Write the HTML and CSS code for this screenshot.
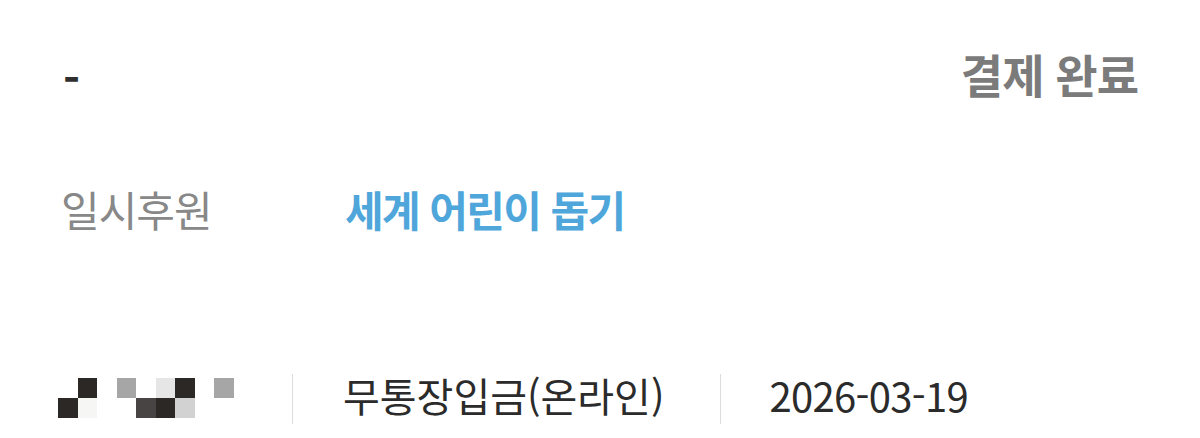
FILE: index.html
```html
<!DOCTYPE html>
<html lang="ko">
<head>
<meta charset="utf-8">
<link rel="stylesheet" href="styles.css">
</head>
<body>
<div class="card">
  <div class="head">
    <span class="dash">-</span>
    <span class="status">결제 완료</span>
  </div>
  <div class="type">
    <span class="label">일시후원</span>
    <span class="campaign">세계 어린이 돕기</span>
  </div>
  <div class="info">
    <div class="masked">
      <i></i><i class="k"></i><i></i><i class="m"></i><i></i><i class="l"></i><i class="k"></i><i></i><i class="m"></i>
      <i class="k"></i><i class="w"></i><i></i><i></i><i class="d"></i><i class="k"></i><i class="s"></i><i></i><i></i>
    </div>
    <span class="sep"></span>
    <span class="method">무통장입금(온라인)</span>
    <span class="sep sep2"></span>
    <span class="date">2026-03-19</span>
  </div>
</div>
</body>
</html>
```
FILE: styles.css
```css
html, body {
  margin: 0;
  padding: 0;
  background: #ffffff;
}
body {
  font-family: "Noto Sans CJK KR", "Noto Sans", sans-serif;
  color: #2b2b2b;
}
.card {
  width: 1200px;
  height: 438px;
  padding: 0 62px 0 58px;
  box-sizing: border-box;
  overflow: hidden;
}
.head {
  height: 146px;
  display: flex;
  justify-content: space-between;
  align-items: center;
}
.dash {
  font-size: 46px;
  font-weight: 700;
  color: #2f2f2f;
  padding-left: 5px;
  margin-top: 7px;
}
.status {
  font-size: 46px;
  font-weight: 700;
  color: #7b7b7b;
  letter-spacing: -1px;
}
.type {
  height: 125px;
  display: flex;
  align-items: center;
}
.label {
  width: 284px;
  padding-left: 3px;
  font-size: 42px;
  color: #888888;
  letter-spacing: -1px;
}
.campaign {
  font-size: 42px;
  font-weight: 700;
  color: #4fa6da;
  letter-spacing: -1.6px;
}
.info {
  margin-top: 82px;
  height: 84px;
  display: flex;
  align-items: center;
}
.masked {
  display: grid;
  grid-template-columns: repeat(9, 19.5px);
  grid-template-rows: repeat(2, 20px);
  width: 234px;
  margin-top: 6px;
}
.masked i { display: block; background: #ffffff; }
.masked i.k { background: #2b2826; }
.masked i.m { background: #a6a6a6; }
.masked i.l { background: #e6e6e6; }
.masked i.w { background: #f6f6f4; }
.masked i.d { background: #474443; }
.masked i.s { background: #d2d2d2; }
.sep {
  width: 1px;
  height: 50px;
  background: #dcdcdc;
  margin-top: 8px;
  margin-right: 50px;
}
.sep2 { margin-left: 56px; }
.method {
  font-size: 40px;
  color: #2b2b2b;
}
.date {
  font-size: 40px;
  color: #2b2b2b;
  letter-spacing: -0.7px;
  margin-left: -2px;
}
```
